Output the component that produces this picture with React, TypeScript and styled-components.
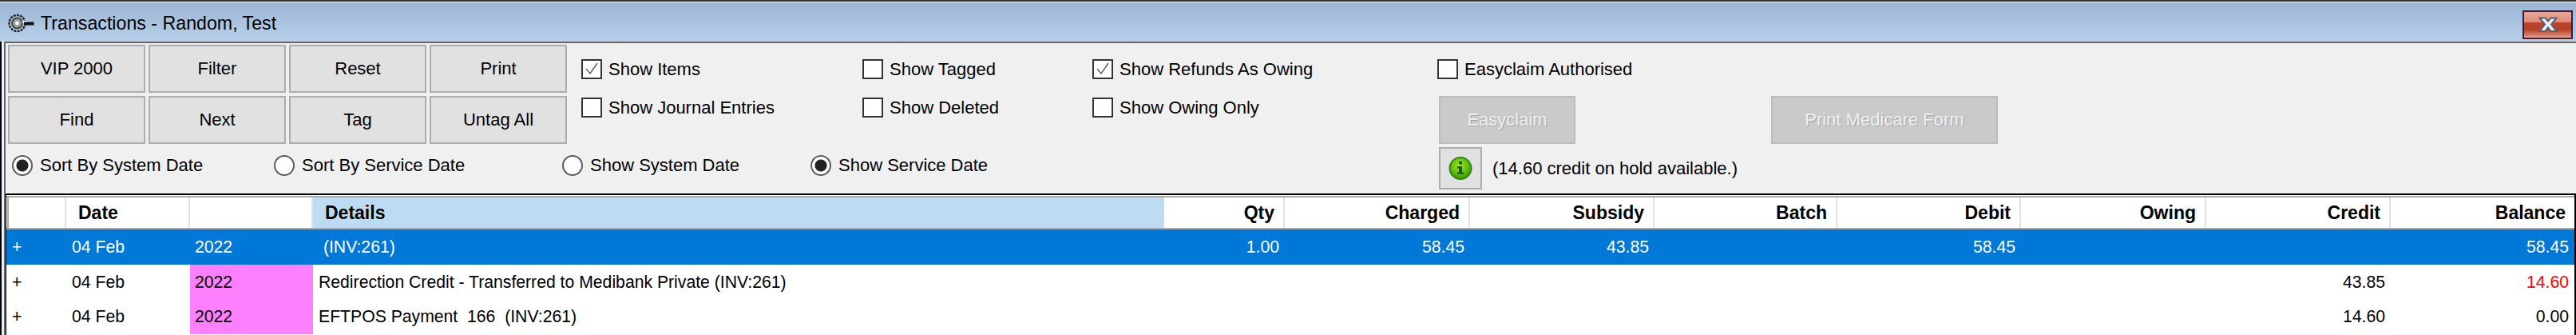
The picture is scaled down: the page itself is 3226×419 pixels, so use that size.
import React from 'react';
import styled, { createGlobalStyle } from 'styled-components';

const GlobalStyle = createGlobalStyle`
  html, body {
    margin: 0;
    padding: 0;
    background: #fff;
  }
  body {
    font-family: "Liberation Sans", Arial, sans-serif;
    font-size: 22px;
    color: #000;
  }
`;

interface Column {
  title: string;
  width: number;
  right?: boolean;
}

interface Transaction {
  date: string;
  year: string;
  details: string;
  qty?: string;
  charged?: string;
  subsidy?: string;
  debit?: string;
  credit?: string;
  balance: string;
  negative?: boolean;
  selected?: boolean;
}

const columns: Column[] = [
  { title: '', width: 75 },
  { title: 'Date', width: 155 },
  { title: '', width: 154 },
  { title: 'Details', width: 1066 },
  { title: 'Qty', width: 151, right: true },
  { title: 'Charged', width: 232, right: true },
  { title: 'Subsidy', width: 231, right: true },
  { title: 'Batch', width: 229, right: true },
  { title: 'Debit', width: 230, right: true },
  { title: 'Owing', width: 232, right: true },
  { title: 'Credit', width: 231, right: true },
  { title: 'Balance', width: 230, right: true },
];

const gridTemplate = columns.map(c => `${c.width}px`).join(' ');

const transactions: Transaction[] = [
  {
    date: '04 Feb',
    year: '2022',
    details: ' (INV:261)',
    qty: '1.00',
    charged: '58.45',
    subsidy: '43.85',
    debit: '58.45',
    balance: '58.45',
    selected: true,
  },
  {
    date: '04 Feb',
    year: '2022',
    details: 'Redirection Credit - Transferred to Medibank Private (INV:261)',
    credit: '43.85',
    balance: '14.60',
    negative: true,
  },
  {
    date: '04 Feb',
    year: '2022',
    details: 'EFTPOS Payment  166  (INV:261)',
    credit: '14.60',
    balance: '0.00',
  },
];

const toolButtons = ['VIP 2000', 'Filter', 'Reset', 'Print', 'Find', 'Next', 'Tag', 'Untag All'];

const checks = [
  [
    { label: 'Show Items', checked: true },
    { label: 'Show Journal Entries' },
  ],
  [{ label: 'Show Tagged' }, { label: 'Show Deleted' }],
  [
    { label: 'Show Refunds As Owing', checked: true },
    { label: 'Show Owing Only' },
  ],
];

const radios = [
  { label: 'Sort By System Date', checked: true, width: 328 },
  { label: 'Sort By Service Date', width: 361 },
  { label: 'Show System Date', width: 311 },
  { label: 'Show Service Date', checked: true, width: 320 },
];

const CheckOption: React.FC<{ label: string; checked?: boolean }> = ({ label, checked }) => (
  <OptionRow>
    <CheckBox>
      {checked && (
        <svg width="22" height="21" viewBox="0 0 22 21">
          <path d="M4 10 L9 16 L18 3" fill="none" stroke="#666" strokeWidth="1.6" />
        </svg>
      )}
    </CheckBox>
    <span>{label}</span>
  </OptionRow>
);

const TargetIcon = () => (
  <svg width="33" height="24" viewBox="0 0 33 24">
    <circle cx="11.5" cy="12" r="10" fill="none" stroke="#222" strokeWidth="2.4" strokeDasharray="3 1.2" />
    <circle cx="11.5" cy="12" r="6.5" fill="#9a9a9a" stroke="#333" strokeWidth="1.5" />
    <circle cx="11.5" cy="12" r="2.4" fill="#fff" />
    <rect x="18" y="9" width="6" height="2.5" fill="#fff" />
    <rect x="20" y="10.5" width="12.5" height="4" fill="#111" />
  </svg>
);

const CloseIcon = () => (
  <svg width="24" height="20" viewBox="0 0 24 20">
    <path
      d="M1.5 1.5 H8.5 L12 5.5 L15.5 1.5 H22.5 L16 9.5 L22.5 18 H15.5 L12 13.5 L8.5 18 H1.5 L8 9.5 Z"
      fill="#eceef0"
      stroke="#5a5f72"
      strokeWidth="2"
    />
  </svg>
);

const InfoIcon = () => (
  <svg width="30" height="29" viewBox="0 0 30 29">
    <defs>
      <radialGradient id="infoFill" cx="45%" cy="38%" r="60%">
        <stop offset="0%" stopColor="#a6e620" />
        <stop offset="70%" stopColor="#5cb80c" />
        <stop offset="100%" stopColor="#3c9408" />
      </radialGradient>
    </defs>
    <circle cx="15" cy="14.5" r="13.5" fill="url(#infoFill)" stroke="#2f8a12" strokeWidth="2" />
    <rect x="13" y="6" width="4" height="3.5" fill="#14600c" />
    <path d="M11 12 H17 V19.5 H19 V22 H11 V19.5 H13 V14.5 H11 Z" fill="#14600c" />
  </svg>
);

const App: React.FC = () => (
  <Window>
    <GlobalStyle />
    <TitleBar>
      <TitleGroup>
        <TargetIcon />
        <span>Transactions - Random, Test</span>
      </TitleGroup>
      <CloseButton>
        <CloseIcon />
      </CloseButton>
    </TitleBar>
    <Frame>
      <Content>
        <Toolbar>
          <LeftPane>
            <TopRow>
              <ButtonGrid>
                {toolButtons.map(label => (
                  <ToolButton key={label}>{label}</ToolButton>
                ))}
              </ButtonGrid>
              <CheckGrid>
                {checks.map((column, index) => (
                  <CheckColumn key={index} $index={index}>
                    {column.map(option => (
                      <CheckOption key={option.label} label={option.label} checked={option.checked} />
                    ))}
                  </CheckColumn>
                ))}
              </CheckGrid>
            </TopRow>
            <RadioRow>
              {radios.map(radio => (
                <RadioOption key={radio.label} $width={radio.width}>
                  <RadioCircle $checked={radio.checked} />
                  <span>{radio.label}</span>
                </RadioOption>
              ))}
            </RadioRow>
          </LeftPane>
          <RightPane>
            <CheckOption label="Easyclaim Authorised" />
            <ClaimRow>
              <DisabledButton $width={171}>Easyclaim</DisabledButton>
              <DisabledButton $width={284}>Print Medicare Form</DisabledButton>
            </ClaimRow>
            <InfoRow>
              <InfoButton>
                <InfoIcon />
              </InfoButton>
              <span>(14.60 credit on hold available.)</span>
            </InfoRow>
          </RightPane>
        </Toolbar>
        <Table>
          <HeaderRow>
            {columns.map((column, index) => (
              <HeaderCell
                key={index}
                $right={column.right}
                $active={column.title === 'Details'}
                $last={index === columns.length - 1}
              >
                {column.title}
              </HeaderCell>
            ))}
          </HeaderRow>
          {transactions.map((t, index) => (
            <Row key={index} $selected={t.selected} $height={index === 1 ? 43 : 44}>
              <Cell>+</Cell>
              <Cell>{t.date}</Cell>
              <YearCell $selected={t.selected}>{t.year}</YearCell>
              <Cell>{t.details}</Cell>
              <Cell $right>{t.qty}</Cell>
              <Cell $right>{t.charged}</Cell>
              <Cell $right>{t.subsidy}</Cell>
              <Cell $right />
              <Cell $right>{t.debit}</Cell>
              <Cell $right />
              <Cell $right>{t.credit}</Cell>
              <Cell $right $negative={t.negative}>{t.balance}</Cell>
            </Row>
          ))}
        </Table>
      </Content>
    </Frame>
  </Window>
);

const Window = styled.div`
  width: 3226px;
  height: 419px;
  overflow: hidden;
  display: flex;
  flex-direction: column;
  background: #fff;
`;

const TitleBar = styled.div`
  box-sizing: border-box;
  height: 52px;
  flex: none;
  display: flex;
  align-items: center;
  justify-content: space-between;
  padding: 4px 4px 0 10px;
  border-top: 2px solid #333;
  box-shadow: inset 0 1px 0 #fff;
  background: linear-gradient(#9ab4d3, #b9d1ea);
  font-size: 23.2px;
`;

const TitleGroup = styled.div`
  display: flex;
  align-items: center;
  gap: 8px;
`;

const CloseButton = styled.div`
  box-sizing: border-box;
  width: 63px;
  height: 36px;
  margin-top: 3px;
  display: flex;
  align-items: center;
  justify-content: center;
  border: 2px solid #4a1628;
  background: linear-gradient(#eaa898 0%, #dd8a74 40%, #b9432a 42%, #b9432a 70%, #dc8b78 95%, #f3d0c8 100%);
`;

const Frame = styled.div`
  flex: 1;
  min-height: 0;
  display: flex;
  padding-left: 3px;
  border-left: 2px solid #000;
  background: #e9eff6;
`;

const Content = styled.div`
  flex: 1;
  min-width: 0;
  display: flex;
  flex-direction: column;
  border-top: 2px solid #666;
  border-left: 2px solid #666;
  background: #f0f0f0;
`;

const Toolbar = styled.div`
  box-sizing: border-box;
  height: 188px;
  flex: none;
  display: flex;
  padding: 2px 0 0 3px;
`;

const LeftPane = styled.div`
  width: 1790px;
  flex: none;
`;

const TopRow = styled.div`
  display: flex;
`;

const ButtonGrid = styled.div`
  display: grid;
  grid-template-columns: repeat(4, 172px);
  grid-template-rows: repeat(2, 60px);
  gap: 4px;
`;

const ToolButton = styled.div`
  box-sizing: border-box;
  display: flex;
  align-items: center;
  justify-content: center;
  border: 2px solid #adadad;
  background: #e1e1e1;
`;

const CheckGrid = styled.div`
  display: flex;
  margin-left: 18px;
  padding-top: 18px;
`;

const CheckColumn = styled.div<{ $index: number }>`
  width: ${p => [352, 288, 432][p.$index]}px;
  display: flex;
  flex-direction: column;
  gap: 23px;
`;

const OptionRow = styled.div`
  height: 25px;
  display: flex;
  align-items: center;
  gap: 8px;
  white-space: nowrap;
`;

const CheckBox = styled.div`
  box-sizing: border-box;
  width: 26px;
  height: 25px;
  flex: none;
  border: 2px solid #333;
  background: #fff;
  display: flex;
`;

const RadioRow = styled.div`
  display: flex;
  margin: 14px 0 0 5px;
`;

const RadioOption = styled.div<{ $width: number }>`
  width: ${p => p.$width}px;
  height: 26px;
  display: flex;
  align-items: center;
  gap: 9px;
  white-space: nowrap;
`;

const RadioCircle = styled.div<{ $checked?: boolean }>`
  box-sizing: border-box;
  width: 26px;
  height: 26px;
  flex: none;
  border-radius: 50%;
  border: 2px solid #5c5c5c;
  background: ${p => (p.$checked ? 'radial-gradient(circle, #222 0 7px, #fff 8px)' : '#fff')};
`;

const RightPane = styled.div`
  padding-top: 18px;
  display: flex;
  flex-direction: column;
`;

const ClaimRow = styled.div`
  display: flex;
  gap: 245px;
  margin: 21px 0 0 2px;
`;

const DisabledButton = styled.div<{ $width: number }>`
  box-sizing: border-box;
  width: ${p => p.$width}px;
  height: 60px;
  display: flex;
  align-items: center;
  justify-content: center;
  border: 2px solid #bcbcbc;
  background: #cacaca;
  color: #f0f0f0;
  text-shadow: 1px 1px 0 #a4a4a4;
  white-space: nowrap;
`;

const InfoRow = styled.div`
  display: flex;
  align-items: center;
  gap: 13px;
  margin: 4px 0 0 2px;
  white-space: nowrap;
`;

const InfoButton = styled.div`
  box-sizing: border-box;
  width: 54px;
  height: 53px;
  display: flex;
  align-items: center;
  justify-content: center;
  border: 2px solid #adadad;
  background: #e1e1e1;
`;

const Table = styled.div`
  flex: 1;
  margin-right: -2px;
  border-top: 2px solid #000;
  border-left: 1px solid #000;
  border-right: 2px solid #000;
  background: #fff;
  width: 3216px;
`;

const HeaderRow = styled.div`
  box-sizing: border-box;
  height: 42px;
  margin-top: 1px;
  display: grid;
  grid-template-columns: ${gridTemplate};
  border-top: 2px solid #a8a8a8;
  border-bottom: 2px solid #a8a8a8;
  box-shadow: inset 1px 0 0 #fff, inset 3px 0 0 #a8a8a8;
`;

const HeaderCell = styled.div<{ $right?: boolean; $active?: boolean; $last?: boolean }>`
  box-sizing: border-box;
  display: flex;
  align-items: center;
  justify-content: ${p => (p.$right ? 'flex-end' : 'flex-start')};
  padding: ${p => (p.$right ? '0 11px 0 0' : '0 0 0 15px')};
  border-right: ${p => (p.$active || p.$last ? 'none' : '2px solid #e2e2e2')};
  background: ${p => (p.$active ? '#bddcf3' : 'transparent')};
  font-size: 23px;
  font-weight: 700;
`;

const Row = styled.div<{ $selected?: boolean; $height: number }>`
  height: ${p => p.$height}px;
  display: grid;
  grid-template-columns: ${gridTemplate};
  background: ${p => (p.$selected ? '#0078d7' : '#fff')};
  color: ${p => (p.$selected ? '#fff' : '#000')};
  font-size: 21.2px;
`;

const Cell = styled.div<{ $right?: boolean; $negative?: boolean }>`
  box-sizing: border-box;
  display: flex;
  align-items: center;
  justify-content: ${p => (p.$right ? 'flex-end' : 'flex-start')};
  padding: ${p => (p.$right ? '0 7px 0 0' : '0 0 0 7px')};
  white-space: pre;
  ${p => p.$negative && 'color: #ff0000;'}
`;

const YearCell = styled(Cell)<{ $selected?: boolean }>`
  padding-left: 6px;
  background: ${p => (p.$selected ? 'transparent' : '#ff80ff')};
`;

export default App;
